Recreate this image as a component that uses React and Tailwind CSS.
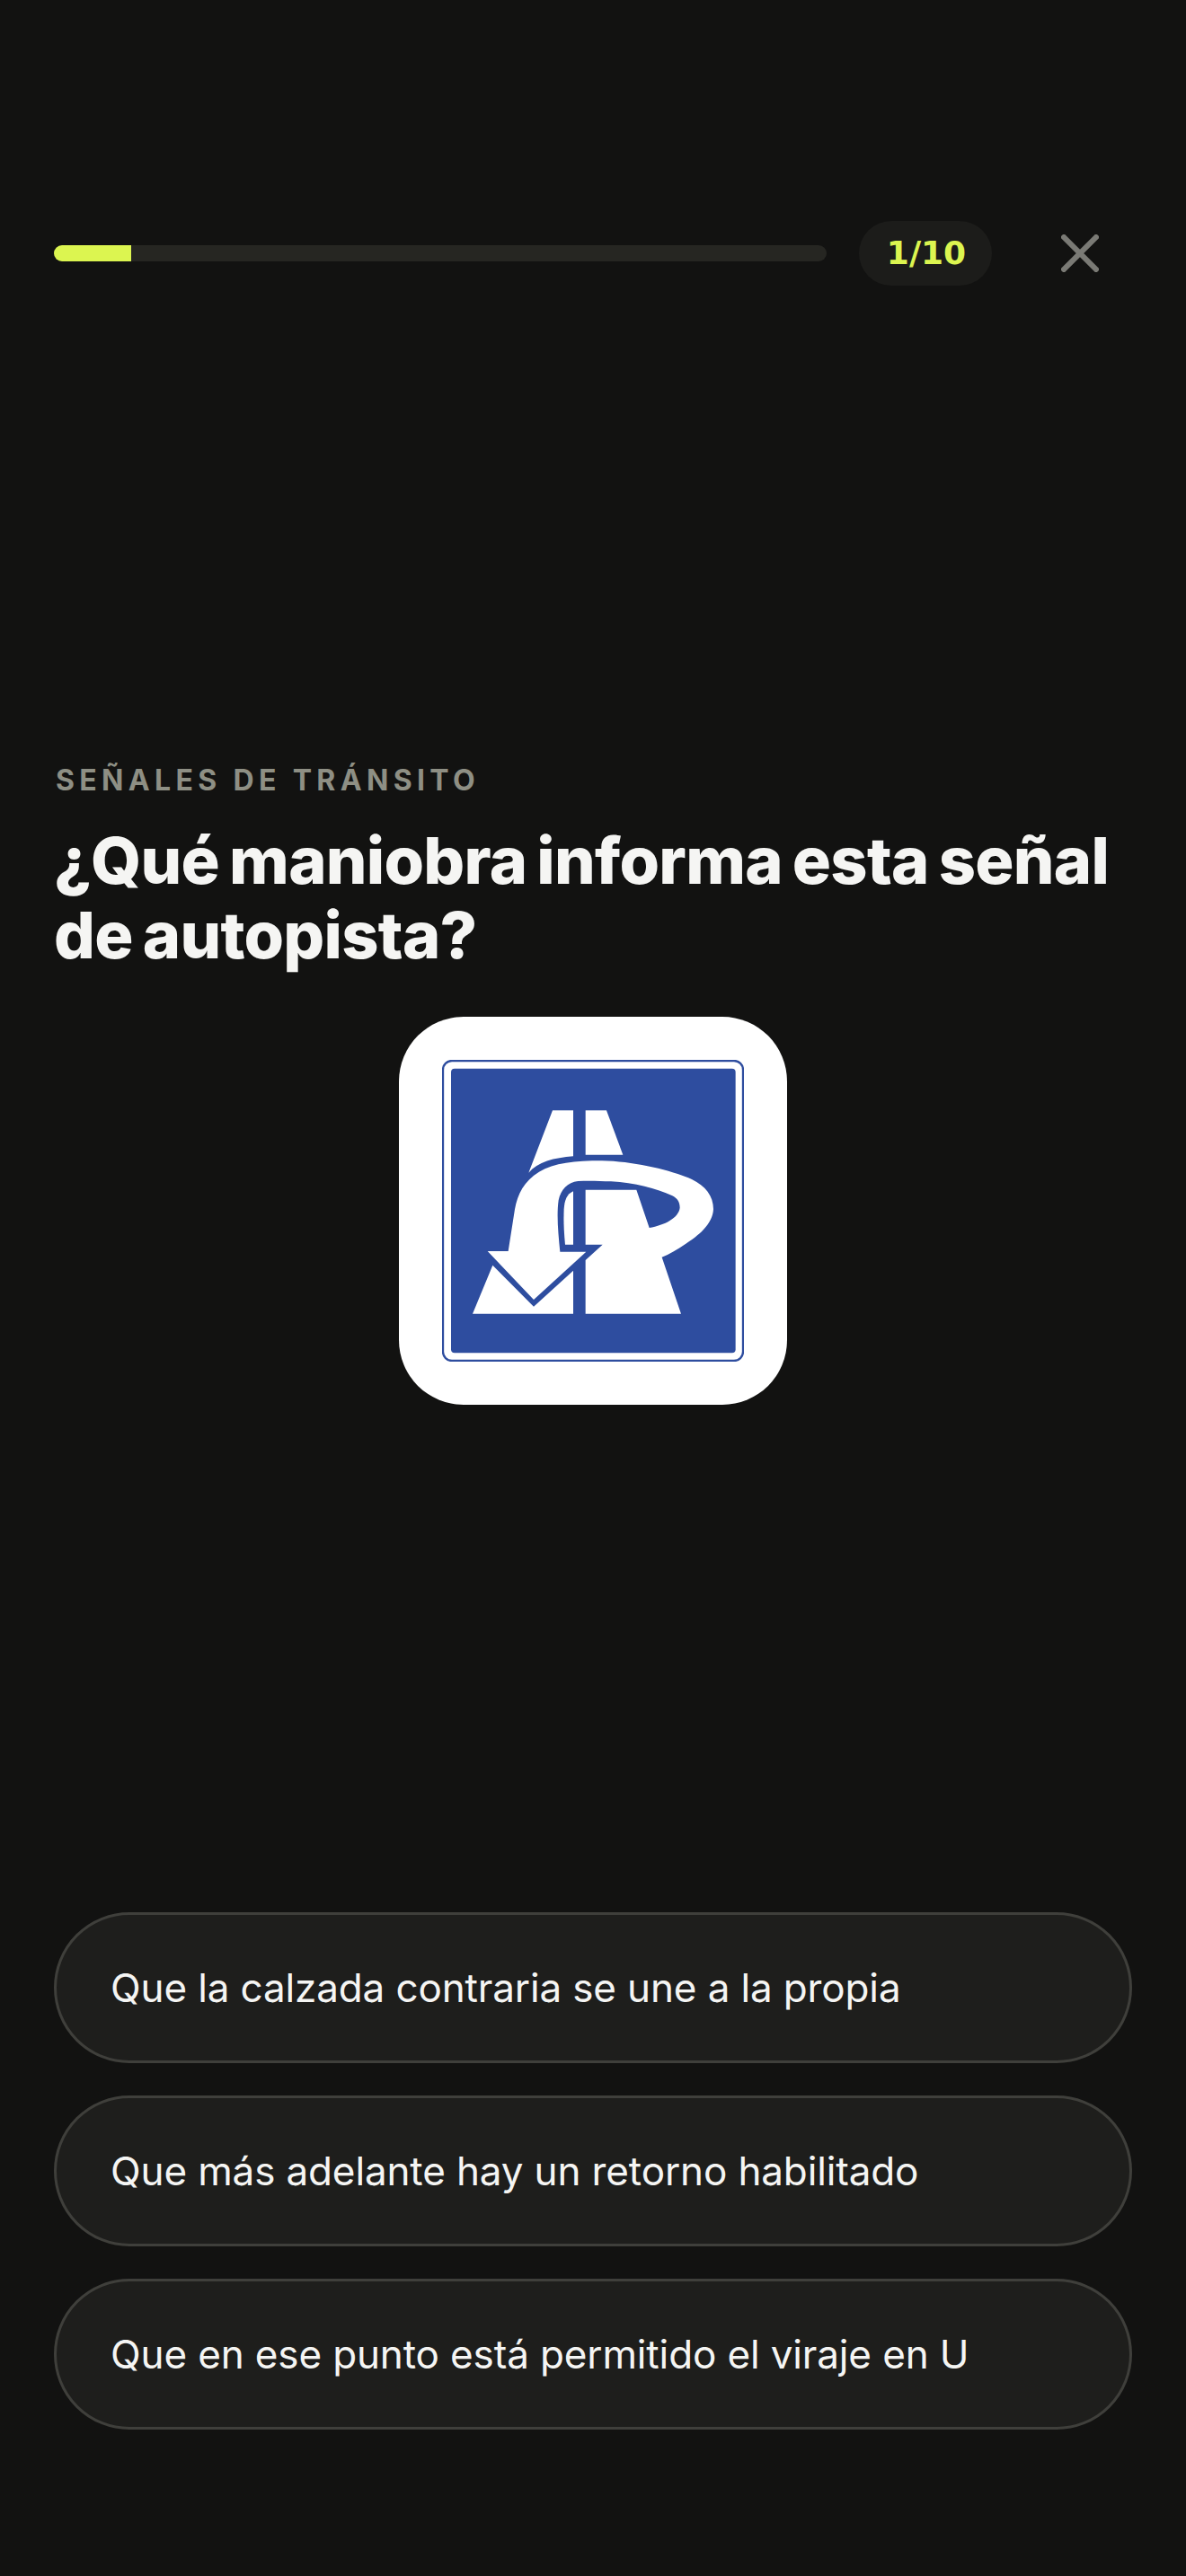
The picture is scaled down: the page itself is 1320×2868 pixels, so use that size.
const options = [
  'Que la calzada contraria se une a la propia',
  'Que más adelante hay un retorno habilitado',
  'Que en ese punto está permitido el viraje en U',
];

const SignIcon = () => (
  <svg viewBox="216 211 1008 1008" className="block h-[336px] w-[336px]">
    <rect x="219" y="214" width="1002" height="1002" rx="30" fill="#fff" stroke="#2e4d9f" strokeWidth="7" />
    <rect x="246" y="240" width="950" height="950" rx="12" fill="#2e4d9f" />
    <g fill="#fff">
      <path d="M585 380H654V533C590 538 535 552 505 588Z" />
      <path d="M695 380H765L820 528H695Z" />
      <path d="M385 897L522 1035L654 915V1059H318Z" />
      <path d="M654 650C632 660 625 680 623 710C621 760 624 795 627 828H654Z" />
      <path d="M695 645H865L908 772L950 870L1014 1059H695V880L752 828H695Z" />
      <path d="M368 850H437L459 710C468 660 490 615 540 585C590 555 660 548 750 548C860 550 980 580 1050 610C1095 632 1122 665 1122 710C1120 760 1070 800 1030 825C1000 845 975 860 950 870L900 860V775L908 772C960 762 1005 740 1010 705C1010 685 1000 672 985 665C930 640 860 622 780 617C740 615 700 614 670 616C635 620 612 645 605 680C598 730 604 790 610 852H697L522 1012Z" />
    </g>
  </svg>
);

const App = () => (
  <div className="flex min-h-[2868px] flex-col bg-[#121211] px-[60px] pb-[163px] pt-[246px] font-['Inter',sans-serif]">
    <div className="flex items-center">
      <div className="h-[18px] w-[860px] overflow-hidden rounded-full bg-[#262622]">
        <div className="h-full w-[86px] bg-[#dcf550]" />
      </div>
      <div className="ml-[36px] flex h-[72px] w-[148px] items-center justify-center rounded-full bg-[#1c1c1a] pl-[2px] font-['DejaVu_Sans',sans-serif] text-[36px] font-bold text-[#dcf550]">
        1/10
      </div>
      <svg viewBox="0 0 42 42" className="ml-[77px] h-[42px] w-[42px]" fill="none" stroke="#7a7a75" strokeWidth="6">
        <path d="M1 1L41 41M41 1L1 41" />
      </svg>
    </div>

    <p className="mt-[531px] pl-[2px] text-[32px] font-bold uppercase leading-[40px] tracking-[0.167em] text-[#8e8f84]">
      Señales de tránsito
    </p>
    <h1 className="mt-[27px] text-[72px] font-extrabold leading-[83px] tracking-[-0.01em] [word-spacing:-4px] text-[#f5f5f3]">
      ¿Qué maniobra informa esta señal de autopista?
    </h1>

    <div className="mt-[50px] flex justify-center">
      <div className="rounded-[72px] bg-white p-[48px]">
        <SignIcon />
      </div>
    </div>

    <div className="mt-auto flex flex-col gap-[36px]">
      {options.map((option) => (
        <button
          key={option}
          type="button"
          className="h-[168px] rounded-full border-[3px] border-[#3f3f3b] bg-[#1e1e1c] px-[60px] text-left text-[44px] tracking-[-0.003em] text-[#f5f5f3]"
        >
          {option}
        </button>
      ))}
    </div>
  </div>
);

export default App;
